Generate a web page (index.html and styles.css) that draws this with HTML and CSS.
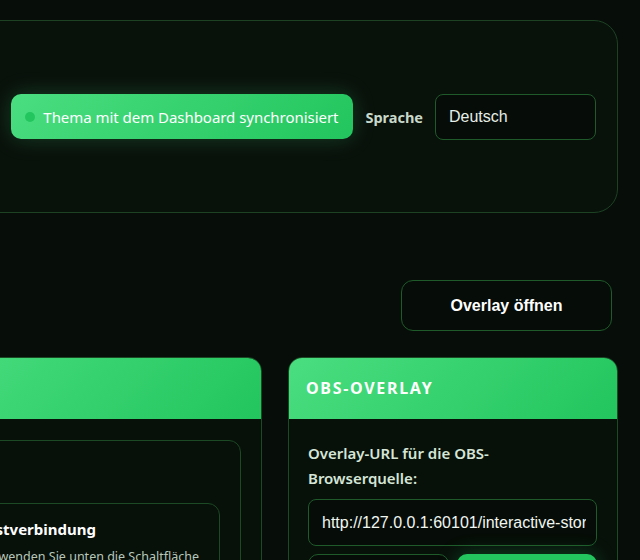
FILE: index.html
```html
<!DOCTYPE html>
<html lang="de">
<head>
  <meta charset="UTF-8" />
  <meta name="viewport" content="width=device-width, initial-scale=1.0" />
  <title>Interactive Story – Overlay</title>
  <link rel="stylesheet" href="styles.css">
</head>
<body>
  <div class="page">
    <div class="top-panel">
      <div class="sync-pill"><span class="dot"></span>Thema mit dem Dashboard synchronisiert</div>
      <span class="lang-label">Sprache</span>
      <div class="lang-select">Deutsch</div>
    </div>

    <div class="toolbar">
      <button class="btn-outline big">Overlay öffnen</button>
    </div>

    <div class="cards">
      <div class="card">
        <div class="card-head">Live</div>
        <div class="card-body">
          <div class="inner-panel">
            <div class="test-box">
              <div class="test-title">Testverbindung</div>
              <p class="test-text">Verwenden Sie unten die Schaltfläche</p>
            </div>
          </div>
        </div>
      </div>

      <div class="card">
        <div class="card-head">OBS-Overlay</div>
        <div class="card-body">
          <p class="field-label">Overlay-URL für die OBS-Browserquelle:</p>
          <input class="url-input" type="text" readonly value="http://127.0.0.1:60101/interactive-story-overlay">
          <div class="btn-row">
            <button class="btn-outline">Kopieren</button>
            <button class="btn-green">Öffnen</button>
          </div>
        </div>
      </div>
    </div>
  </div>
</body>
</html>
```

FILE: styles.css
```css
body {
  margin: 0;
  background: #070e09;
  font-family: "Noto Sans", sans-serif;
  color: #e8f2ea;
  overflow: hidden;
}
.page {
  width: 960px;
  margin-left: -342px;
  padding-top: 20px;
}
.top-panel {
  height: 191px;
  border: 1px solid #1c4223;
  border-radius: 24px;
  background: #09110b;
  display: flex;
  align-items: center;
  justify-content: flex-end;
  padding: 0 21px;
}
.sync-pill {
  display: flex;
  align-items: center;
  gap: 8px;
  height: 45px;
  margin-right: 12px;
  padding: 0 15px 0 14px;
  border-radius: 10px;
  background: linear-gradient(135deg, #4ade80, #22c55e);
  box-shadow: 0 0 22px rgba(74, 222, 128, 0.22);
  color: #fff;
  font-size: 15px;
  letter-spacing: -0.04px;
}
.dot {
  width: 10px;
  height: 10px;
  border-radius: 50%;
  background: #22c55e;
}
.lang-label {
  margin-right: 12px;
  font-size: 14.5px;
  font-weight: 700;
  color: #c8d9ca;
}
.lang-select {
  width: 146px;
  height: 44px;
  line-height: 44px;
  padding-left: 13px;
  border: 1px solid #1f5a2a;
  border-radius: 8px;
  background: #060c07;
  font-family: "Liberation Sans", Arial, sans-serif;
  font-size: 16px;
  color: #e6efe7;
}
.toolbar {
  display: flex;
  justify-content: flex-end;
  margin-top: 67px;
  padding-right: 6px;
}
button {
  font-family: "Liberation Sans", Arial, sans-serif;
  font-size: 16px;
  font-weight: 700;
  color: #fff;
  cursor: pointer;
}
.btn-outline {
  background: #060c07;
  border: 1px solid #1f5a2a;
  border-radius: 10px;
}
.btn-outline.big {
  width: 211px;
  height: 51px;
  border-radius: 12px;
}
.btn-green {
  background: #22c55e;
  border: none;
  border-radius: 10px;
  box-shadow: 0 0 20px rgba(34, 197, 94, 0.3);
}
.cards {
  display: grid;
  grid-template-columns: 343px 330px;
  gap: 26px;
  justify-content: end;
  margin-top: 26px;
}
.card {
  border: 1px solid #1b4a24;
  border-radius: 14px;
  background: #08100a;
  overflow: hidden;
  height: 260px;
}
.card-head {
  height: 61px;
  line-height: 61px;
  padding-left: 17px;
  background: linear-gradient(135deg, #4ade80, #22c55e);
  color: #fff;
  font-size: 16px;
  font-weight: 700;
  letter-spacing: 1.7px;
  text-transform: uppercase;
}
.card-body {
  padding: 21px 20px 20px 19px;
}
.inner-panel {
  border: 1px solid #1b4a24;
  border-radius: 12px;
  padding: 62px 20px 20px 20px;
}
.test-box {
  border: 1px solid #1b4a24;
  border-radius: 12px;
  padding: 13px 10px 18px 18px;
}
.test-title {
  font-size: 15px;
  font-weight: 700;
  line-height: 24px;
  color: #fff;
}
.test-text {
  margin: 7px 0 0;
  font-size: 12.5px;
  color: #b7c8ba;
}
.field-label {
  margin: 1px 0 8px;
  font-size: 15px;
  font-weight: 600;
  line-height: 25px;
  color: #d5e6d7;
}
.url-input {
  display: block;
  box-sizing: border-box;
  width: 100%;
  height: 47px;
  padding: 0 10px 0 13px;
  border: 1px solid #1f5a2a;
  border-radius: 8px;
  background: #060c07;
  font-family: "Liberation Sans", Arial, sans-serif;
  font-size: 16px;
  color: #f0f6f1;
  outline: none;
}
.btn-row {
  display: grid;
  grid-template-columns: 1fr 1fr;
  gap: 8px;
  margin-top: 8px;
}
.btn-row button {
  height: 44px;
}
```
